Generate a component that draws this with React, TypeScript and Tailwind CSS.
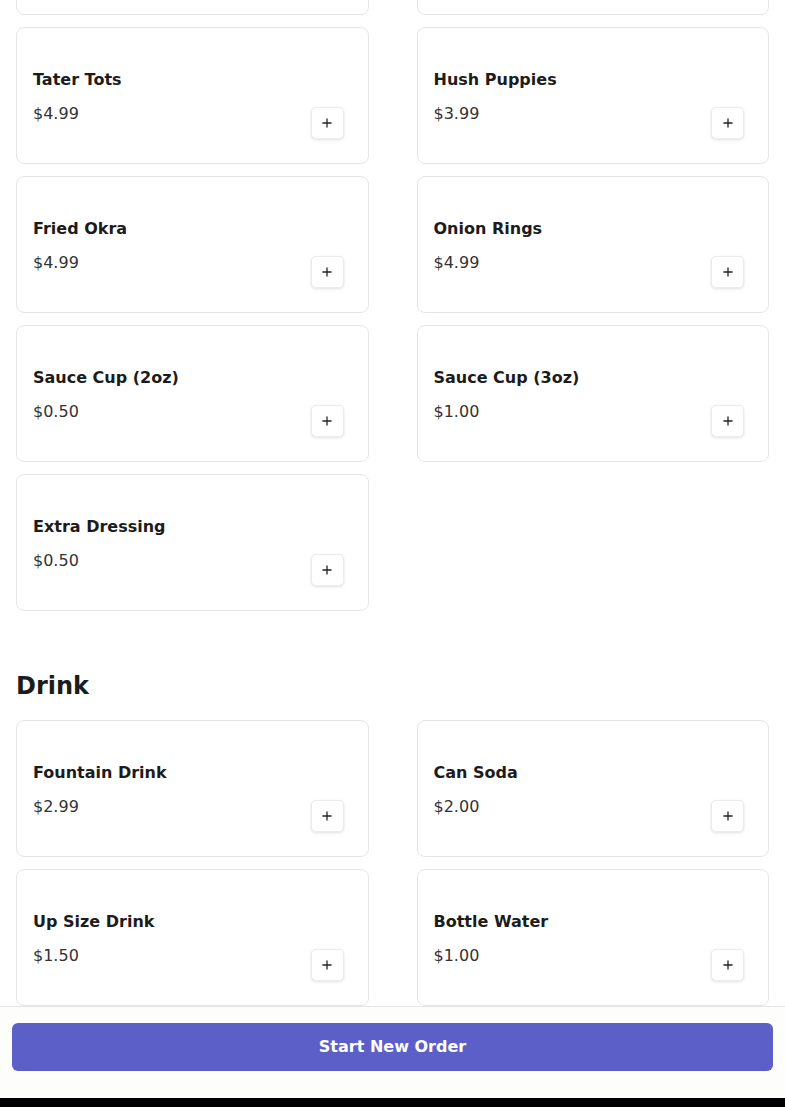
import { Plus } from "lucide-react";

type Item = { name: string; price: string };

const sides: Item[] = [
    { name: "French Fries", price: "$3.99" },
    { name: "Cheese Fries", price: "$5.49" },
    { name: "Tater Tots", price: "$4.99" },
    { name: "Hush Puppies", price: "$3.99" },
    { name: "Fried Okra", price: "$4.99" },
    { name: "Onion Rings", price: "$4.99" },
    { name: "Sauce Cup (2oz)", price: "$0.50" },
    { name: "Sauce Cup (3oz)", price: "$1.00" },
    { name: "Extra Dressing", price: "$0.50" },
];

const drinks: Item[] = [
    { name: "Fountain Drink", price: "$2.99" },
    { name: "Can Soda", price: "$2.00" },
    { name: "Up Size Drink", price: "$1.50" },
    { name: "Bottle Water", price: "$1.00" },
];

function MenuCard({ item }: { item: Item }) {
    return (
        <div className="h-[137px] rounded-lg border border-[#e6e6e6] bg-white pl-4 pr-6 pt-10 flex items-start justify-between">
            <div className="flex flex-col">
                <h3 className="text-base leading-6 font-bold text-[#1c1c1c]">{item.name}</h3>
                <p className="mt-2.5 text-base leading-6 text-[#333]">{item.price}</p>
            </div>
            <button className="mt-[39px] w-[33px] h-8 rounded-[5px] border border-[#ececec] bg-white shadow-[0_1px_3px_rgba(0,0,0,0.12)] flex items-center justify-center text-[#222]">
                <Plus size={14} strokeWidth={2.2} />
            </button>
        </div>
    );
}

export default function App() {
    return (
        <div
            className="relative h-[1107px] overflow-hidden bg-white"
            style={{ fontFamily: '"DejaVu Sans", sans-serif' }}
        >
            <div className="px-4 -mt-[122px]">
                <div className="grid grid-cols-2 gap-x-12 gap-y-3">
                    {sides.map((item) => (
                        <MenuCard key={item.name} item={item} />
                    ))}
                </div>

                <h2 className="mt-[59px] mb-[18px] text-2xl leading-8 font-bold text-[#1c1c1c]">Drink</h2>

                <div className="grid grid-cols-2 gap-x-12 gap-y-3">
                    {drinks.map((item) => (
                        <MenuCard key={item.name} item={item} />
                    ))}
                </div>
            </div>

            {/* bottom action bar */}
            <div className="absolute left-0 right-0 bottom-0 flex flex-col">
                <div className="border-t border-[#e4e4e4] bg-[#fdfdfc] px-3 pt-4 pb-[27px]">
                    <button className="w-full h-12 rounded-md bg-[#5b5fc7] text-white text-base font-bold">
                        Start New Order
                    </button>
                </div>
                <div className="h-[9px] bg-black" />
            </div>
        </div>
    );
}
